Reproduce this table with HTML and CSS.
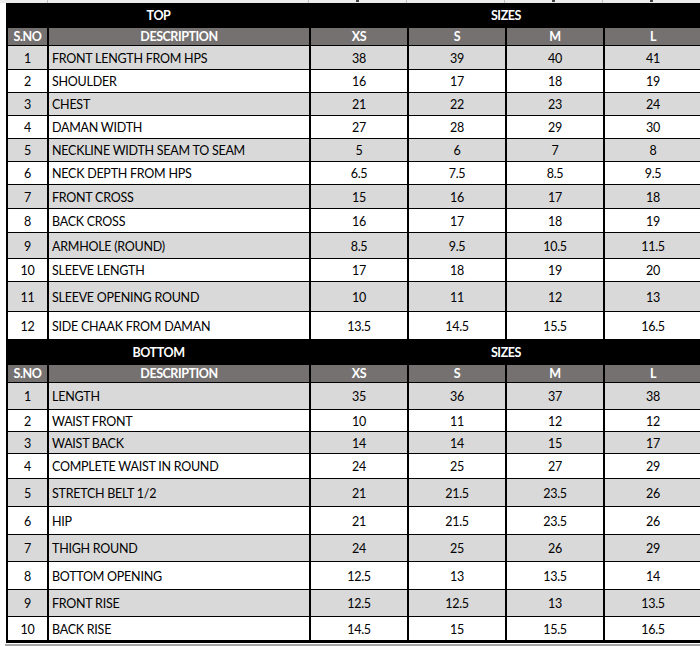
FILE: index.html
```html
<!DOCTYPE html>
<html>
<head>
<meta charset="utf-8">
<link rel="stylesheet" href="styles.css">
</head>
<body>
<div class="sheet">
  <div class="strip">
    <div class="sc"></div><div class="sc"></div><div class="sc mark"></div><div class="sc"></div><div class="sc mark"></div><div class="sc mark"></div><div class="sc mark"></div>
  </div>
  <div class="tbl">
    <div class="c title span2">TOP</div><div class="c title span4">SIZES</div>
    <div class="c hd">S.NO</div><div class="c hd">DESCRIPTION</div><div class="c hd">XS</div><div class="c hd">S</div><div class="c hd">M</div><div class="c hd">L</div>

    <div class="c g n">1</div><div class="c g d">FRONT LENGTH FROM HPS</div><div class="c g n">38</div><div class="c g n">39</div><div class="c g n">40</div><div class="c g n">41</div>
    <div class="c w n">2</div><div class="c w d">SHOULDER</div><div class="c w n">16</div><div class="c w n">17</div><div class="c w n">18</div><div class="c w n">19</div>
    <div class="c g n">3</div><div class="c g d">CHEST</div><div class="c g n">21</div><div class="c g n">22</div><div class="c g n">23</div><div class="c g n">24</div>
    <div class="c w n">4</div><div class="c w d">DAMAN WIDTH</div><div class="c w n">27</div><div class="c w n">28</div><div class="c w n">29</div><div class="c w n">30</div>
    <div class="c g n">5</div><div class="c g d">NECKLINE WIDTH SEAM TO SEAM</div><div class="c g n">5</div><div class="c g n">6</div><div class="c g n">7</div><div class="c g n">8</div>
    <div class="c w n">6</div><div class="c w d">NECK DEPTH FROM HPS</div><div class="c w n">6.5</div><div class="c w n">7.5</div><div class="c w n">8.5</div><div class="c w n">9.5</div>
    <div class="c g n">7</div><div class="c g d">FRONT CROSS</div><div class="c g n">15</div><div class="c g n">16</div><div class="c g n">17</div><div class="c g n">18</div>
    <div class="c w n">8</div><div class="c w d">BACK CROSS</div><div class="c w n">16</div><div class="c w n">17</div><div class="c w n">18</div><div class="c w n">19</div>
    <div class="c g n">9</div><div class="c g d">ARMHOLE (ROUND)</div><div class="c g n">8.5</div><div class="c g n">9.5</div><div class="c g n">10.5</div><div class="c g n">11.5</div>
    <div class="c w n">10</div><div class="c w d">SLEEVE LENGTH</div><div class="c w n">17</div><div class="c w n">18</div><div class="c w n">19</div><div class="c w n">20</div>
    <div class="c g n">11</div><div class="c g d">SLEEVE OPENING ROUND</div><div class="c g n">10</div><div class="c g n">11</div><div class="c g n">12</div><div class="c g n">13</div>
    <div class="c w n">12</div><div class="c w d">SIDE CHAAK FROM DAMAN</div><div class="c w n">13.5</div><div class="c w n">14.5</div><div class="c w n">15.5</div><div class="c w n">16.5</div>

    <div class="c title span2">BOTTOM</div><div class="c title span4">SIZES</div>
    <div class="c hd">S.NO</div><div class="c hd">DESCRIPTION</div><div class="c hd">XS</div><div class="c hd">S</div><div class="c hd">M</div><div class="c hd">L</div>

    <div class="c g n">1</div><div class="c g d">LENGTH</div><div class="c g n">35</div><div class="c g n">36</div><div class="c g n">37</div><div class="c g n">38</div>
    <div class="c w n">2</div><div class="c w d">WAIST FRONT</div><div class="c w n">10</div><div class="c w n">11</div><div class="c w n">12</div><div class="c w n">12</div>
    <div class="c g n">3</div><div class="c g d">WAIST BACK</div><div class="c g n">14</div><div class="c g n">14</div><div class="c g n">15</div><div class="c g n">17</div>
    <div class="c w n">4</div><div class="c w d">COMPLETE WAIST IN ROUND</div><div class="c w n">24</div><div class="c w n">25</div><div class="c w n">27</div><div class="c w n">29</div>
    <div class="c g n">5</div><div class="c g d">STRETCH BELT 1/2</div><div class="c g n">21</div><div class="c g n">21.5</div><div class="c g n">23.5</div><div class="c g n">26</div>
    <div class="c w n">6</div><div class="c w d">HIP</div><div class="c w n">21</div><div class="c w n">21.5</div><div class="c w n">23.5</div><div class="c w n">26</div>
    <div class="c g n">7</div><div class="c g d">THIGH ROUND</div><div class="c g n">24</div><div class="c g n">25</div><div class="c g n">26</div><div class="c g n">29</div>
    <div class="c w n">8</div><div class="c w d">BOTTOM OPENING</div><div class="c w n">12.5</div><div class="c w n">13</div><div class="c w n">13.5</div><div class="c w n">14</div>
    <div class="c g n">9</div><div class="c g d">FRONT RISE</div><div class="c g n">12.5</div><div class="c g n">12.5</div><div class="c g n">13</div><div class="c g n">13.5</div>
    <div class="c w n">10</div><div class="c w d">BACK RISE</div><div class="c w n">14.5</div><div class="c w n">15</div><div class="c w n">15.5</div><div class="c w n">16.5</div>
  </div>
  <div class="below"></div>
</div>
</body>
</html>
```
FILE: styles.css
```css
html, body {
  margin: 0;
  padding: 0;
  background: #fff;
  overflow: hidden;
}
.sheet {
  width: 700px;
  height: 646px;
  overflow: hidden;
  font-family: Lato, "Liberation Sans", sans-serif;
  font-size: 12.5px;
  letter-spacing: -0.25px;
  color: #000;
}
.strip {
  height: 3px;
  background: #ececec;
  display: grid;
  grid-template-columns: 48px 261px 98px 98px 98px 98px 100px;
}
.sc {
  border-right: 1px solid #bdbdbd;
  display: flex;
  justify-content: center;
}
.sc.mark::after {
  content: "";
  width: 3px;
  height: 2px;
  background: #444;
}
.tbl {
  margin-left: 6px;
  width: 700px;
  background: #000;
  padding: 0 2px 3px 2px;
  display: grid;
  grid-template-columns: 39px 260px 96px 96px 96px 96px;
  grid-template-rows: 24px 17px 23px 22px 22px 22px 22px 22px 23px 23px 25px 22px 29px 27px 24px 17px 26px 21px 21px 24px 27px 27px 26px 27px 26px 23px;
  column-gap: 2px;
  row-gap: 1px;
}
.c {
  display: flex;
  align-items: center;
  white-space: nowrap;
  overflow: hidden;
}
.title {
  background: #000;
  color: #fff;
  font-weight: bold;
  justify-content: center;
  letter-spacing: -0.4px;
}
.span2 { grid-column: span 2; }
.span4 { grid-column: span 4; }
.hd {
  background: #757171;
  color: #fff;
  font-weight: bold;
  justify-content: center;
  letter-spacing: -0.45px;
}
.g { background: #d9d9d9; }
.w { background: #fff; }
.n { justify-content: center; padding-top: 1px; }
.d { padding-left: 3px; padding-top: 1px; }
.below {
  height: 1px;
  margin-left: 5px;
  border-bottom: 2px solid #a6a6a6;
}
```
